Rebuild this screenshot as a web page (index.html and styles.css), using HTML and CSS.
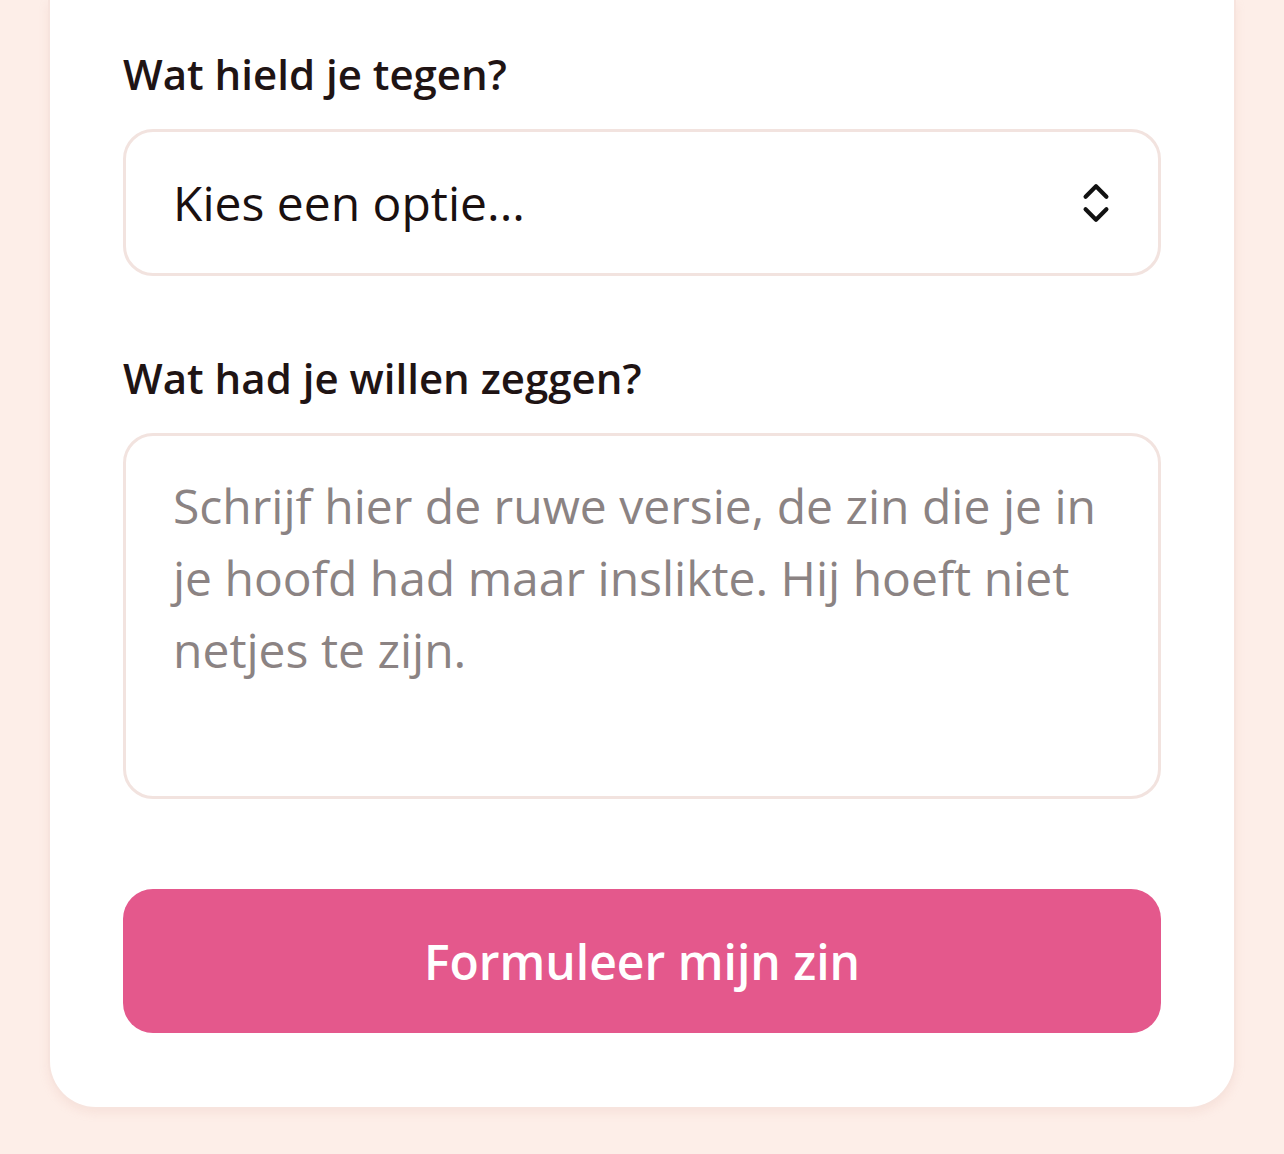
FILE: index.html
```html
<!DOCTYPE html>
<html lang="nl">
<head>
<meta charset="utf-8">
<title>Formuleer mijn zin</title>
<link rel="stylesheet" href="styles.css">
</head>
<body>
<main class="card">
  <form class="form">
    <div class="field">
      <label class="label" for="obstacle">Wat hield je tegen?</label>
      <div class="select" id="obstacle">
        <span class="select-text">Kies een optie...</span>
        <svg class="select-icon" viewBox="0 0 24 24" width="50" height="50" fill="none" stroke="#111" stroke-width="2" stroke-linecap="round" stroke-linejoin="round" aria-hidden="true">
          <path d="m7 15 5 5 5-5"/>
          <path d="m7 9 5-5 5 5"/>
        </svg>
      </div>
    </div>
    <div class="field field-second">
      <label class="label" for="raw">Wat had je willen zeggen?</label>
      <textarea class="textarea" id="raw" placeholder="Schrijf hier de ruwe versie, de zin die je in je hoofd had maar inslikte. Hij hoeft niet netjes te zijn."></textarea>
    </div>
    <button type="button" class="button">Formuleer mijn zin</button>
  </form>
</main>
</body>
</html>
```
FILE: styles.css
```css
html, body {
  margin: 0;
  padding: 0;
}
body {
  background: #fdeee8;
  font-family: "Open Sans", "Noto Sans", sans-serif;
  min-height: 1154px;
}
.card {
  margin: 0 48px;
  background: #ffffff;
  border: 2px solid #f7e4de;
  border-top: 0;
  border-radius: 0 0 48px 48px;
  box-shadow: 0 4px 10px rgba(220, 170, 160, 0.18);
  padding: 42px 73px 74px;
}
.form {
  display: flex;
  flex-direction: column;
}
.field {
  display: flex;
  flex-direction: column;
  gap: 24px;
}
.field-second {
  margin-top: 70px;
  gap: 24px;
}
.label {
  font-size: 42px;
  line-height: 63px;
  font-weight: 600;
  color: #1f1414;
}
.select {
  box-sizing: border-box;
  height: 147px;
  border: 3px solid #f2e3df;
  border-radius: 30px;
  display: flex;
  align-items: center;
  justify-content: space-between;
  padding: 0 37px 0 47px;
  background: #fff;
}
.select-text {
  font-size: 48px;
  color: #1a1010;
  line-height: 64px;
}
.select-icon {
  display: block;
  flex: none;
}
.textarea {
  box-sizing: border-box;
  height: 366px;
  border: 3px solid #f2e3df;
  border-radius: 30px;
  padding: 34px 36px 0 47px;
  font-family: "Open Sans", "Noto Sans", sans-serif;
  font-size: 48px;
  line-height: 72px;
  color: #1a1010;
  resize: none;
  outline: none;
  background: #fff;
  display: block;
  width: 100%;
}
.textarea::placeholder {
  color: #8b8383;
  opacity: 1;
}
.button {
  margin-top: 90px;
  height: 144px;
  border: 0;
  border-radius: 30px;
  background: #e4588c;
  color: #ffffff;
  font-family: "Open Sans", "Noto Sans", sans-serif;
  font-size: 48px;
  font-weight: 600;
  cursor: pointer;
}
```
